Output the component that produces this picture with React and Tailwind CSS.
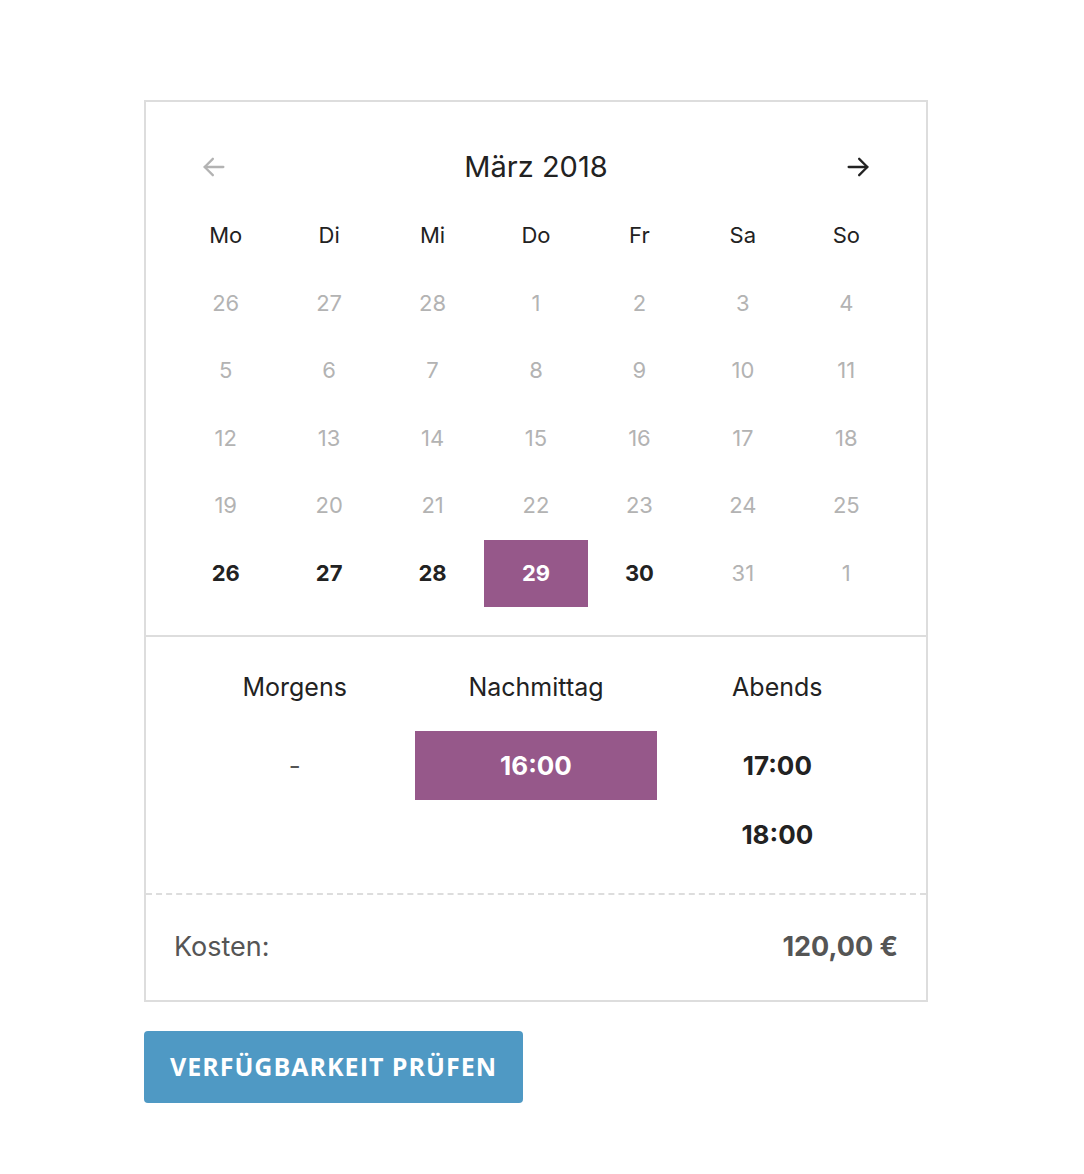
import React from "react";

const days = ["Mo", "Di", "Mi", "Do", "Fr", "Sa", "So"];

// each cell: [label, state] — state: "off" (grey), "on" (bold), "sel" (selected)
const weeks = [
  [["26", "off"], ["27", "off"], ["28", "off"], ["1", "off"], ["2", "off"], ["3", "off"], ["4", "off"]],
  [["5", "off"], ["6", "off"], ["7", "off"], ["8", "off"], ["9", "off"], ["10", "off"], ["11", "off"]],
  [["12", "off"], ["13", "off"], ["14", "off"], ["15", "off"], ["16", "off"], ["17", "off"], ["18", "off"]],
  [["19", "off"], ["20", "off"], ["21", "off"], ["22", "off"], ["23", "off"], ["24", "off"], ["25", "off"]],
  [["26", "on"], ["27", "on"], ["28", "on"], ["29", "sel"], ["30", "on"], ["31", "off"], ["1", "off"]],
];

const slots = [
  { title: "Morgens", times: [["-", "none"]] },
  { title: "Nachmittag", times: [["16:00", "sel"]] },
  { title: "Abends", times: [["17:00", "on"], ["18:00", "on"]] },
];

function Arrow({ dir, className }) {
  return (
    <svg viewBox="0 0 24 24" className={className} fill="none" stroke="currentColor" strokeWidth="2" strokeLinecap="round" strokeLinejoin="round">
      {dir === "left" ? (
        <>
          <path d="M20 12H4" />
          <path d="M11 5l-7 7 7 7" />
        </>
      ) : (
        <>
          <path d="M4 12h16" />
          <path d="M13 5l7 7-7 7" />
        </>
      )}
    </svg>
  );
}

function DayCell({ label, state }) {
  if (state === "sel") {
    return (
      <div className="h-[67.5px] flex items-center justify-center bg-[#96588a] text-white font-bold">
        {label}
      </div>
    );
  }
  return (
    <div
      className={
        "h-[67.5px] flex items-center justify-center " +
        (state === "on" ? "text-[#222] font-bold" : "text-[#b3b3b3]")
      }
    >
      {label}
    </div>
  );
}

export default function App() {
  return (
    <div className="min-h-screen bg-white pt-[100px] pl-[144px] font-['Inter','Noto_Sans',sans-serif]">
      <div className="w-[784px] border-2 border-[#dddddd]">
        {/* CALENDAR */}
        <div className="px-[28px] pb-[28px] border-b-2 border-[#dddddd]">
          <div className="pt-[44px] h-[86px] px-[26px] flex items-center justify-between">
            <button className="text-[#b3b3b3]">
              <Arrow dir="left" className="w-[28px] h-[28px]" />
            </button>
            <span className="text-[29px] leading-[42px] text-[#222]">März 2018</span>
            <button className="text-[#222]">
              <Arrow dir="right" className="w-[28px] h-[28px]" />
            </button>
          </div>

          <div className="mt-[14px] grid grid-cols-7 text-[22px]">
            {days.map(d => (
              <div key={d} className="h-[67.5px] flex items-center justify-center text-[#222]">
                {d}
              </div>
            ))}
            {weeks.flat().map(([label, state], i) => (
              <DayCell key={i} label={label} state={state} />
            ))}
          </div>
        </div>

        {/* TIME SLOTS */}
        <div className="px-[28px] pt-[33px] pb-[24px] grid grid-cols-3">
          {slots.map(col => (
            <div key={col.title} className="flex flex-col">
              <div className="h-[36px] flex items-center justify-center text-[25px] text-[#222]">
                {col.title}
              </div>
              <div className="mt-[25px] flex flex-col">
                {col.times.map(([t, state]) => (
                  <div
                    key={t}
                    className={
                      "h-[69px] flex items-center justify-center text-[26px] " +
                      (state === "sel"
                        ? "bg-[#96588a] text-white font-bold"
                        : state === "on"
                        ? "text-[#222] font-bold"
                        : "text-[#555]")
                    }
                  >
                    {t}
                  </div>
                ))}
              </div>
            </div>
          ))}
        </div>

        {/* COST */}
        <div className="border-t-2 border-dashed border-[#dddddd] px-[28px] h-[107px] flex items-center justify-between text-[27px] text-[#555]">
          <span>Kosten:</span>
          <span className="font-bold">120,00 €</span>
        </div>
      </div>

      <button className="mt-[29px] h-[72px] px-[26px] rounded-[4px] bg-[#4f99c4] text-white text-[25px] font-bold tracking-[1px] font-['Open_Sans',sans-serif]">
        VERFÜGBARKEIT PRÜFEN
      </button>
    </div>
  );
}
